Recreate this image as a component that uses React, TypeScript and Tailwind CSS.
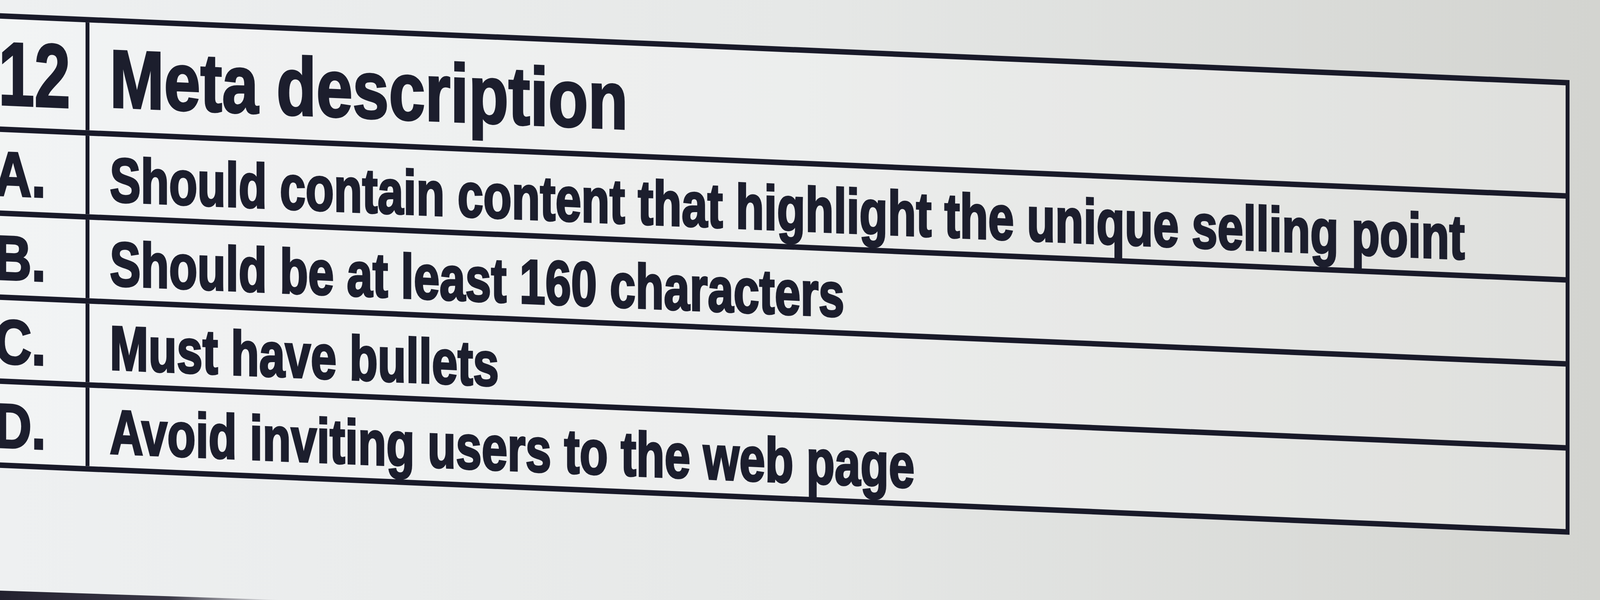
const rows = [
  { label: "A.", text: "Should contain content that highlight the unique selling point" },
  { label: "B.", text: "Should be at least 160 characters" },
  { label: "C.", text: "Must have bullets" },
  { label: "D.", text: "Avoid inviting users to the web page" },
];

export default function App() {
  return (
    <div className="relative h-screen w-full overflow-hidden bg-linear-to-r from-[#eef0f1] via-[#e6e8e7] to-[#d3d4d0] font-['Liberation_Sans',Arial,sans-serif] font-bold text-[#1c1e2d]">
      {/* the photo is taken at an angle, so the sheet is slanted */}
      <div className="origin-center skew-y-[2.44deg] pt-[121px]">
        <div className="ml-[-52px] w-[4070px] border-x-[10px] border-y-[14px] border-[#191a29] bg-white/25 [-webkit-text-stroke:5px_#1c1e2d]">
          <div className="flex h-[290px] border-b-[14px] border-[#191a29]">
            <div className="flex w-[271px] shrink-0 items-center border-r-[10px] border-[#191a29] pl-[38px] pt-[6px] text-[230px] leading-none">
              <span className="inline-block origin-left scale-x-[0.72]">12</span>
            </div>
            <div className="flex items-center whitespace-nowrap pl-[52px] pt-[8px] text-[210px] leading-none">
              <span className="inline-block origin-left scale-x-[0.795]">Meta description</span>
            </div>
          </div>
          {rows.map((r, i) => (
            <div
              key={r.label}
              className={
                i < rows.length - 1
                  ? "flex h-[215px] border-b-[14px] border-[#191a29]"
                  : "flex h-[201px]"
              }
            >
              <div className="flex w-[271px] shrink-0 items-center border-r-[10px] border-[#191a29] pl-[28px] pt-[12px] text-[160px] leading-none">
                <span className="inline-block origin-left scale-x-[0.82]">{r.label}</span>
              </div>
              <div className="flex items-center whitespace-nowrap pl-[52px] pt-[20px] text-[160px] leading-none">
                <span className="inline-block origin-left scale-x-[0.742]">{r.text}</span>
              </div>
            </div>
          ))}
        </div>
      </div>

      {/* edge of the monitor bezel in the lower left corner */}
      <svg
        className="absolute bottom-0 left-0"
        width="720"
        height="26"
        viewBox="0 0 720 26"
      >
        <defs>
          <linearGradient id="bezel" x1="0" x2="1" y1="0" y2="0">
            <stop offset="0" stopColor="#23212f" />
            <stop offset="0.6" stopColor="#3a3846" />
            <stop offset="1" stopColor="#3a3846" stopOpacity="0" />
          </linearGradient>
        </defs>
        <polygon points="0,2 720,26 0,26" fill="url(#bezel)" />
      </svg>
    </div>
  );
}
